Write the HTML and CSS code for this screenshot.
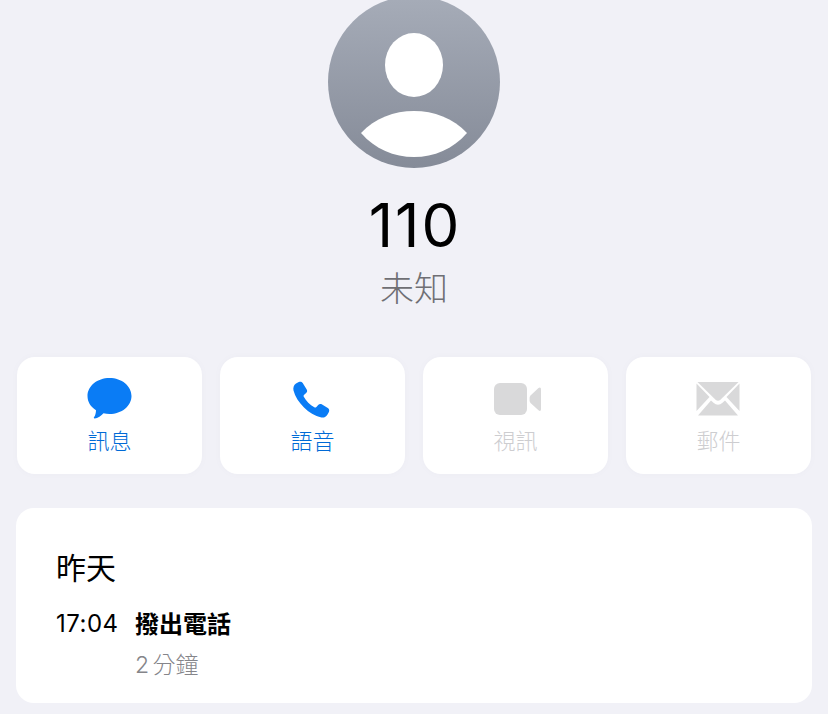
FILE: index.html
```html
<!DOCTYPE html>
<html lang="zh-Hant">
<head>
<meta charset="utf-8">
<title>110</title>
<link rel="stylesheet" href="styles.css">
</head>
<body>
<main class="page">
  <header class="hero">
    <svg class="avatar" viewBox="0 0 172 172" width="172" height="172" aria-hidden="true">
      <defs>
        <linearGradient id="avatarFill" x1="0" y1="0" x2="0" y2="1">
          <stop offset="0" stop-color="#a6acb8"/>
          <stop offset="1" stop-color="#858b98"/>
        </linearGradient>
      </defs>
      <circle cx="86" cy="86" r="86" fill="url(#avatarFill)"/>
      <ellipse cx="86" cy="69" rx="29" ry="32" fill="#fff"/>
      <path d="M33 137 C47 122 66 115 86 115 C106 115 125 122 139 137 C125 153 106 161 86 161 C66 161 47 153 33 137 Z" fill="#fff"/>
    </svg>
    <h1 class="number">110</h1>
    <p class="label">未知</p>
  </header>

  <nav class="actions">
    <div class="action">
      <svg class="icon" viewBox="0 0 46 42" width="46" height="42" aria-hidden="true">
        <path d="M22.500 0 C34.800 0 44.500 8 44.500 18 C44.500 28 34.800 36 22.500 36 C20.400 36 18.500 35.800 16.500 35.300 C14.500 37.800 10.500 40.300 7.800 40.600 C6.800 40.700 6.500 39.800 7.100 39.100 C8.100 37.800 9 35 9 32.200 C3.500 28.700 .5 23.700 .5 18 C.5 8 10.200 0 22.500 0 Z" fill="#0a7cf5"/>
      </svg>
      <span class="caption">訊息</span>
    </div>
    <div class="action">
      <svg class="icon" viewBox="0 0 46 42" width="46" height="42" aria-hidden="true">
        <path transform="translate(-1 0)" d="M7 5.500 L9.800 4 C11.300 3.300 12.800 3.700 13.700 5 L17.700 11.500 C18.500 12.800 18.200 14.200 17.100 15.100 L15.200 16.700 C14.500 17.300 14.400 18 14.800 18.800 C17 23 21 27 25.300 29.300 C26.100 29.700 26.800 29.600 27.400 28.900 L29.200 26.900 C30.100 25.900 31.500 25.600 32.700 26.300 L38.800 30 C40.200 30.900 40.600 32.500 39.900 33.900 L38.500 36.500 C37.300 38.800 34.900 40 32.400 39.500 C25.700 38.100 20 34.500 15 29.500 C10 24.500 6 18.500 4.500 12.500 C3.900 9.700 4.800 6.900 7 5.500 Z" fill="#0a7cf5"/>
      </svg>
      <span class="caption">語音</span>
    </div>
    <div class="action is-off">
      <svg class="icon" viewBox="0 0 50 42" width="50" height="42" aria-hidden="true">
        <rect x="3" y="5" width="33" height="32" rx="6" fill="#d9d9da"/>
        <path d="M39.500 17.500 L47.500 10 C49 8.800 50 9.600 50 11.500 L50 31 C50 32.800 49 33.500 47.500 32.300 L39.500 25 C38.900 24.300 38.600 23.500 38.600 22.500 L38.600 20 C38.600 19 38.900 18.200 39.500 17.500 Z" fill="#d9d9da"/>
      </svg>
      <span class="caption">視訊</span>
    </div>
    <div class="action is-off">
      <svg class="icon" viewBox="0 0 46 42" width="46" height="42" aria-hidden="true">
        <path d="M1.500 4 L42.500 4 L24.700 21.500 C22.800 23.300 21.200 23.300 19.300 21.500 Z" fill="#d9d9da"/>
        <path d="M.5 5.500 L13.500 19 L.5 33 Z M43.500 5.500 L30.500 19 L43.500 33 Z" fill="#d9d9da"/>
        <path d="M2 37.500 L15 22.500 L17.500 24.800 C20.500 27.300 23.500 27.300 26.500 24.800 L29 22.500 L42 37.500 Z" fill="#d9d9da"/>
      </svg>
      <span class="caption">郵件</span>
    </div>
  </nav>

  <section class="log">
    <h2 class="log-day">昨天</h2>
    <div class="log-row">
      <span class="log-time">17:04</span>
      <div class="log-info">
        <strong class="log-kind">撥出電話</strong>
        <span class="log-length">2 分鐘</span>
      </div>
    </div>
  </section>
</main>
</body>
</html>
```

FILE: styles.css
```css
* {
  box-sizing: border-box;
}

html,
body {
  margin: 0;
  height: 100%;
}

body {
  background: #f1f1f7;
  overflow: hidden;
  font-family: Inter, "Noto Sans CJK TC", sans-serif;
}

.page {
  display: flex;
  flex-direction: column;
  padding: 0 17px;
}

.hero {
  display: flex;
  flex-direction: column;
  align-items: center;
  margin-top: -4px;
}

.avatar {
  display: block;
}

.number {
  margin: 24px 0 0;
  padding-left: 2px;
  font-size: 60px;
  line-height: 66px;
  font-weight: 400;
  letter-spacing: 2px;
  color: #000;
}

.label {
  margin: 11px 0 0;
  font-size: 34px;
  line-height: 40px;
  font-weight: 300;
  color: #6f6f74;
}

.actions {
  display: grid;
  grid-template-columns: repeat(4, 185px);
  column-gap: 18px;
  margin-top: 48px;
}

.action {
  display: flex;
  flex-direction: column;
  align-items: center;
  height: 117px;
  padding-top: 21px;
  background: #fff;
  border-radius: 18px;
  box-shadow: 0 0 6px rgba(120, 120, 160, 0.04);
}

.icon {
  display: block;
}

.caption {
  margin-top: 6px;
  font-size: 22px;
  line-height: 30px;
  font-weight: 300;
  color: #006ad6;
}

.is-off .caption {
  color: #cdcdd0;
}

.log {
  margin: 34px -1px 0;
  height: 195px;
  padding: 41px 40px 0;
  background: #fff;
  border-radius: 18px;
}

.log-day {
  margin: 0;
  font-size: 30px;
  line-height: 38px;
  font-weight: 400;
  color: #000;
}

.log-row {
  display: flex;
  margin-top: 21px;
}

.log-time {
  width: 79px;
  font-size: 24px;
  line-height: 32px;
  letter-spacing: 0.5px;
  color: #000;
}

.log-info {
  display: flex;
  flex-direction: column;
  padding-top: 1px;
}

.log-kind {
  font-size: 24px;
  line-height: 32px;
  font-weight: 700;
  color: #000;
}

.log-length {
  margin-top: 9px;
  font-size: 23px;
  line-height: 30px;
  word-spacing: -3px;
  font-weight: 300;
  color: #85858a;
}
```
